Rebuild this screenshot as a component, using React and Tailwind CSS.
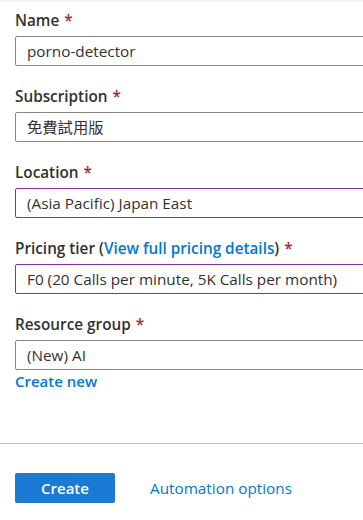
import React from "react";

const fields = [
  { id: "name", label: "Name", value: "porno-detector", focus: false },
  { id: "sub", label: "Subscription", value: "免費試用版", focus: false },
  { id: "loc", label: "Location", value: "(Asia Pacific) Japan East", focus: true },
  { id: "tier", label: "Pricing tier", value: "F0 (20 Calls per minute, 5K Calls per month)", focus: true, link: "View full pricing details" },
  { id: "rg", label: "Resource group", value: "(New) AI", focus: false },
];

function Field({ field }) {
  return (
    <div>
      <div className="h-[20px] leading-[20px] mb-[6px] text-[15.3px] font-semibold text-[#323130]">
        {field.label}
        {field.link && (
          <>
            {" ("}
            <span className="text-[#0078d4]">{field.link}</span>
            {")"}
          </>
        )}
        <span className="text-[#a4262c] ml-[5px]">*</span>
      </div>
      <div
        className={`w-[380px] h-[30px] rounded-[2px] border flex items-center pl-[11px] text-[15.3px] text-[#323130] ${
          field.focus ? "border-[#8a2da5]" : "border-[#8a8886]"
        }`}
      >
        {field.value}
      </div>
    </div>
  );
}

export default function App() {
  return (
    <div
      className="w-[363px] h-[520px] overflow-hidden bg-white"
      style={{ fontFamily: '"Open Sans", "Noto Sans CJK TC", sans-serif' }}
    >
      <div className="h-[3px] bg-gradient-to-b from-[#f0f0f0] to-white" />
      <div className="pl-[15px] pt-[7px] flex flex-col gap-[20px]">
        {fields.map((f) => (
          <Field key={f.id} field={f} />
        ))}
      </div>
      <div className="pl-[15px] mt-[1px] h-[20px] leading-[20px] text-[15px] font-semibold text-[#0078d4]">
        Create new
      </div>
      <div className="mt-[52px] border-t border-[#bdbdbd]" />
      <div className="pl-[15px] pt-[29px] flex items-center gap-[35px]">
        <button className="w-[100px] h-[30px] rounded-[2px] bg-[#1a7ad4] text-white text-[15px] font-semibold">
          Create
        </button>
        <span className="text-[15.3px] text-[#0078d4]">Automation options</span>
      </div>
    </div>
  );
}
